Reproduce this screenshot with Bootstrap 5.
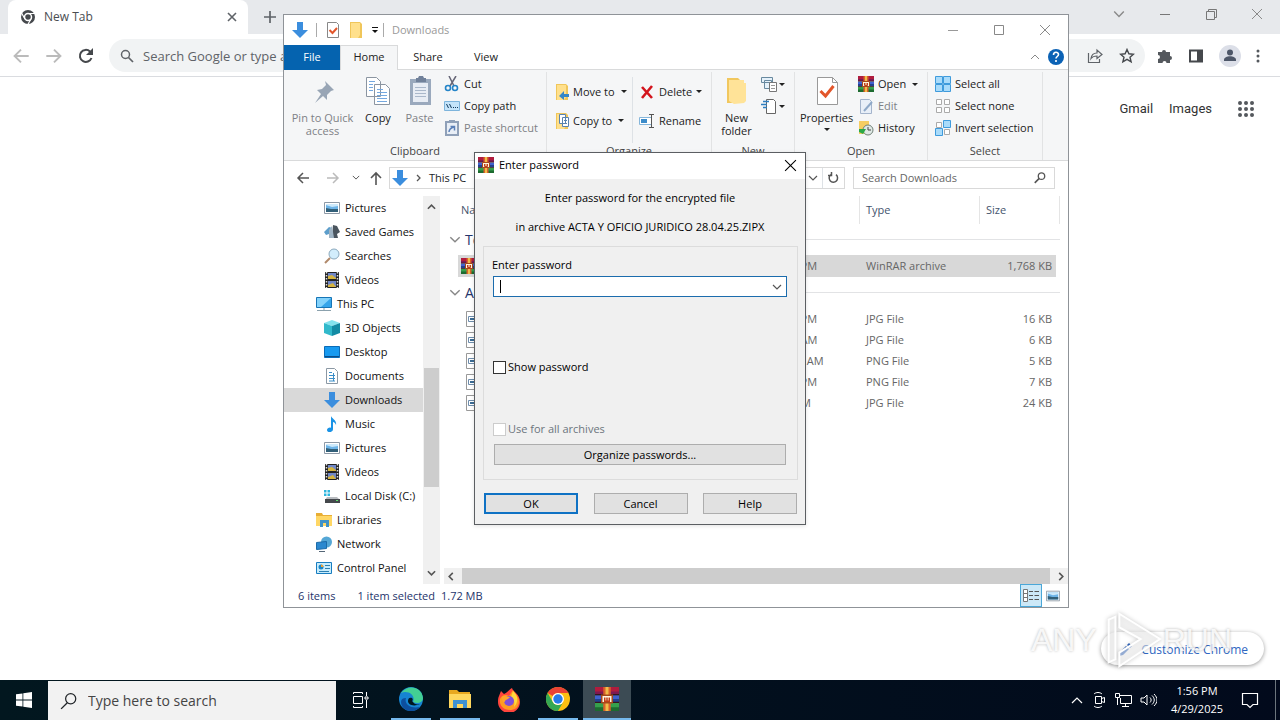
<!DOCTYPE html>
<html lang="en">
<head>
<meta charset="utf-8">
<meta name="viewport" content="width=device-width, initial-scale=1">
<title>New Tab</title>
<link rel="stylesheet" href="https://cdn.jsdelivr.net/npm/bootstrap@5.3.0/dist/css/bootstrap.min.css">
<style>
:root{--ui:"Open Sans","Noto Sans",sans-serif;--line:#d9dadb}
body{font:11px/16px var(--ui);color:#222;background:#fff;overflow:hidden}
svg{display:block;flex:none}
.i16{width:16px;height:16px}.i24{width:24px;height:24px}.i32{width:32px;height:32px}
button,a{color:inherit;text-decoration:none}
button{border:0;background:none;padding:0}
.desk{min-height:100vh}
.dim{color:#bbb}
/* browser */
.tabstrip{height:34px;background:#e7e9ec;padding-left:8px}
.tabitem{width:240px;height:34px;background:#fff;border-radius:8px 8px 0 0;padding:0 10px 0 12px;font-size:12px;color:#4a4d51}
.wbtn{width:46px;height:28px;color:#8a8a8a}
.toolbar{height:43px;border-bottom:1px solid #dadce0;padding:5px 10px 4px 12px;color:#5f6368}
.toolbar>button{margin-right:15px}
.omni{height:33px;border-radius:17px;background:#f1f3f4;padding:0 10px;margin-right:12px}
.omni input{border:0;background:none;outline:0;font-size:13px;color:#5f6368;padding:0}
.omni input::placeholder{color:#5f6368;opacity:1}
.tools{gap:15px;padding-right:10px}
.toplinks{padding:22px 24px 0 0;font:13px/20px Roboto,sans-serif;color:#333}
.customize{height:33px;border-radius:17px;background:#fff;box-shadow:0 1px 4px rgba(0,0,0,.4);color:#2f67c2;font-size:12px;padding:2px 16px 0;margin:0 16px 15px 0}
/* file window */
.fwin{position:absolute;left:283px;top:14px;width:786px;background:#fff;border:1px solid #8f9398;z-index:2}
.ftitle{height:30px;color:#999;padding-left:8px}
.vbar{width:1px;height:14px;background:#aaa}
.ftabs{height:25px;border-bottom:1px solid var(--line)}
.ftab{height:25px;padding:0 0 2px;width:56px}
.ftab.file{background:#0563af;color:#fff}
.ftab.home{width:58px;background:#f5f6f7;border:1px solid var(--line);border-bottom:0}
.ftab.share{width:60px}
.ribbon{height:91px;background:#f5f6f7;border-bottom:1px solid var(--line)}
.rgroup{border-right:1px solid #e2e3e4;margin-top:2px;height:88px;padding-top:1px}
.rlabel{height:16px;text-align:center;color:#444}
.rbody{height:70px}
.big{line-height:13px;text-align:center;padding-top:2px}
.big svg{margin:0 auto 4px}
.small22 button{height:22px}
.org button{height:29px}
.off{color:#7e8186}
.caret{width:0;height:0;border:3px solid transparent;border-top-color:#222;border-bottom:0;margin-left:2px}
.addr{height:35px;padding:5px 12px 7px 12px;color:#555}
.addrbox,.searchbox{height:22px;border:1px solid #d9d9d9;background:#fff}
.addrbox{width:456px;margin-left:5px;padding-left:2px}.searchbox{width:202px;padding:0 8px}
.searchbox input{border:0;outline:0;background:none;padding:0;color:#555}
.searchbox input::placeholder{color:#666;opacity:1}
.tree{width:139px}
.tree a{height:24px;padding-left:40px;gap:5px;color:#111;white-space:nowrap}
.tree a.lvl{padding-left:32px}
.tree a.sel{background:#d9d9d9}
.scroll{width:17px;background:#f0f0f0}
.thumb{background:#cdcdcd}
.vthumb{height:119px;width:15px;margin-top:158px}
.files{margin-left:14px;width:602px;table-layout:fixed;border-collapse:separate;border-spacing:0;color:#666}
.files th{font-weight:400;color:#44546d;height:28px;border-right:1px solid #e5e5e5;padding:0 6px}
.files th:first-child{padding-left:3px}
.files td{height:21px;padding:0 6px;white-space:nowrap}
.files td:first-child{padding-left:3px}
.files td:last-child{text-align:right;padding-right:8px}
.files tr.grp td{height:31px;color:#25346b;font-size:14px;padding:0;text-align:left}
.files .grp div{gap:4px;margin-left:-9px}
.files .grp i{height:1px;background:#e2e3e5;flex:1}
.files .picked td{height:22px;background:#d8d8d8}
.files .picked td:last-child{background:linear-gradient(to right,#d8d8d8 76px,#fff 76px)}
.status{height:23px;color:#25346b;padding-left:14px}
.vmode{width:22px;height:23px;border:1px solid #fff}
.vmode.on{background:#cce8f7;border-color:#4aa7d8}
/* dialog */
.dlg{position:absolute;left:474px;top:152px;width:332px;background:#f0f0f0;border:1px solid #5b5e62;z-index:4;color:#000;box-shadow:0 1px 4px rgba(0,0,0,.12)}
.dtitle{height:26px;background:#fff;padding:0 8px 2px 3px;gap:5px}
.box{border:1px solid #dcdcdc;margin:11px 7px 0 8px;padding:10px 10px 14px 8px;height:234px}
.combo{height:21px;border:1px solid #1b6cad;background:#fff;margin:3px 0 0 1px;position:relative;color:#555}
.combo input{border:0;outline:0;background:none;padding:0 6px;height:19px;caret-color:transparent}
.combo .cur{position:absolute;left:6px;top:3px;width:1px;height:13px;background:#000}
.tickrow{margin-left:1px;gap:2px}
.tick{appearance:none;width:13px;height:13px;border:1px solid #333;background:#fff;margin:0}
.tick:disabled{border-color:#ccc}
.wbt{height:21px;background:#e1e1e1;border:1px solid #adadad;color:#000}
.wbt.go{border:2px solid #0f72c4}
.foot{padding:13px 8px 10px 9px}
.foot .wbt{width:94px}
/* taskbar */
.task{height:40px;background:linear-gradient(to right,#02171f,#020a1c);color:#fff}
.tsearch{width:288px;height:39px;margin-top:1px;background:#f2f2f2;padding:0 12px;gap:10px}
.tsearch input{border:0;outline:0;background:none;font:14px/20px var(--ui);color:#333;padding:0}
.tsearch input::placeholder{color:#444;opacity:1}
.pinned{padding-left:3px}
.tb{width:48px;height:40px;margin-right:1px;padding:0 4px;display:flex;flex-direction:column}
.tb svg{margin:auto}
.tb.open::after{content:"";height:2px;width:100%;background:#76b9ed}
.tb.act{background:#3c4b54;padding:0}
.tray{gap:8px}
.clock{font-size:11px;line-height:18px;text-align:center;width:64px}
/* watermark */
.wm{position:absolute;right:48px;bottom:49px;z-index:5;pointer-events:none;font:32px/62px "Liberation Sans",sans-serif;color:rgba(255,255,255,.85);text-shadow:0 0 3px rgba(0,0,0,.28)}
.wm svg{filter:drop-shadow(0 0 2px rgba(0,0,0,.25))}
</style>
</head>
<body>
<svg width="0" height="0" class="position-absolute" aria-hidden="true">
<symbol id="down" viewBox="0 0 16 16"><path d="M5 0h6v8h5L8 16 0 8h5z" fill="#3b8ede"/></symbol>
<symbol id="rar" viewBox="0 0 16 16"><path fill="#b01c3e" d="M0 0h16v5H0z"/><path fill="#7d1a52" d="M0 3h16v2H0z"/><path fill="#3f62cf" d="M0 5.500h16v4.500H0z"/><path fill="#23408f" d="M0 8h16v2H0z"/><path fill="#35a04c" d="M0 10.500h16V16H0z"/><path fill="#1d6b30" d="M0 13.500h16V16H0z"/><path fill="#35161c" d="M0 4.700h16v.8H0zM0 9.900h16v.8H0z"/><path fill="#d9622a" d="M5.500 0h5v16h-5z"/><path fill="#f0bd4a" d="M7 0h2v16H7z"/><path fill="#fff6df" stroke="#a5481c" d="M4.500 5.500h7v5h-7z"/><path stroke="#c23e18" d="M6.500 7v2.500h3V7M8 7v2" fill="none"/></symbol>
<symbol id="sheet" viewBox="0 0 32 32"><path fill="#fff" stroke="#999" d="M6.500 2.500h15l5 5v22h-20z"/><path fill="none" stroke="#999" d="M21.500 2.500v5h5"/><path fill="none" stroke="#e2562b" stroke-width="3" d="M9.500 16l5 5 8-10"/></symbol>
<symbol id="sheetsm" viewBox="0 0 16 16"><path fill="#fff" stroke="#888" d="M2.500.5h9l2 2v13h-11z"/><path fill="none" stroke="#e2562b" stroke-width="2" d="M4.500 8l3 3 4.500-5"/></symbol>
<symbol id="folder" viewBox="0 0 14 16"><path fill="#f0c65a" d="M1 0h10l2 2v14H1z"/><path fill="#ffe08c" d="M2 1h9v12l-2 3H2z"/></symbol>
<symbol id="pic" viewBox="0 0 16 16"><path fill="#fff" stroke="#8d99a6" d="M.5 2.500h15v11H.5z"/><path fill="#6db4e8" d="M2 4h12v8H2z"/><path fill="#cce9fb" d="M2 4h12v2L8 7 2 5z"/><path fill="#315f78" d="M2 8l5 1 7 0v3H2z"/></symbol>
<symbol id="film" viewBox="0 0 16 16"><path fill="#222" d="M1 0h14v16H1z"/><path fill="#7087c7" d="M4 1h8v6H4zM4 9h8v6H4z"/><path fill="#d5b440" d="M4 4l4-1 4 3v1H4zM4 13l5-2 3 4H4z"/><path stroke="#ddd" stroke-width="1.500" stroke-dasharray="1.500 1.500" d="M2.500 0v16M13.500 0v16"/></symbol>
<symbol id="screen" viewBox="0 0 16 16"><path fill="#36a5ea" stroke="#1775b6" d="M.5 1.500h15v10H.5z"/><path fill="#83d2fb" d="M1 2h14L5 11H1z"/><path stroke="#8ba1ad" stroke-width="1" d="M1 14.500h14M8 12v2"/></symbol>
<symbol id="chrome" viewBox="0 0 24 24"><circle cx="12" cy="12" r="12" fill="#fbbf12"/><path fill="#e94235" d="M1.600 6A12 12 0 0 1 22.400 6H12a6 6 0 0 0-5.200 3z"/><path fill="#34a853" d="M1.600 6A12 12 0 0 0 12 24l5.200-9A6 6 0 0 1 6.800 15z"/><circle cx="12" cy="12" r="6" fill="#fff"/><circle cx="12" cy="12" r="4.700" fill="#277be8"/></symbol>
<symbol id="img" viewBox="0 0 14 16"><path fill="#fff" stroke="#999" d="M1.500.5h9l3 3v12h-12z"/><path fill="#fff" stroke="#6e8dac" d="M3.500 5.500h7v5h-7z"/><path fill="#3b6b94" d="M5 7h4v2H5z"/></symbol>
<symbol id="x" viewBox="0 0 12 12"><path d="M1 1l10 10M11 1L1 11" stroke="currentColor" fill="none"/></symbol>
<symbol id="mag" viewBox="0 0 16 16"><circle cx="9.500" cy="6" r="4.500" fill="none" stroke="currentColor" stroke-width="1.100"/><path stroke="currentColor" stroke-width="1.200" d="M6.500 9.500L1 15"/></symbol>
<symbol id="chev" viewBox="0 0 10 6"><path d="M1 1l4 4 4-4" fill="none" stroke="currentColor" stroke-width="1.200"/></symbol>
<symbol id="arr" viewBox="0 0 14 14"><path d="M13 7H2M7 2L2 7l5 5" fill="none" stroke="currentColor" stroke-width="1.500"/></symbol>
<symbol id="arl" viewBox="0 0 14 14"><path d="M1 7h11M7 2l5 5-5 5" fill="none" stroke="currentColor" stroke-width="1.500"/></symbol>
</svg>

<div class="desk d-flex flex-column position-relative">
  <header>
    <div class="tabstrip d-flex">
      <div class="tabitem d-flex align-items-center">
        <svg width="16" height="16" viewBox="0 0 16 16"><circle cx="8" cy="8" r="7" fill="#45484c"/><circle cx="8" cy="8" r="3.500" fill="#45484c" stroke="#fff" stroke-width="1.500"/><path stroke="#fff" stroke-width="1.200" d="M8 4.500h7M5 10L1.500 4M11 10l-3.500 6"/></svg>
        <span class="ms-2">New Tab</span>
        <button class="ms-auto" aria-label="Close tab"><svg width="12" height="12" viewBox="0 0 12 12"><path d="M2 2l8 8M10 2l-8 8" stroke="#5f6368" stroke-width="1.600"/></svg></button>
      </div>
      <button class="ms-3" aria-label="New tab"><svg width="12" height="12" viewBox="0 0 12 12"><path d="M6 0v12M0 6h12" stroke="#5f6368" stroke-width="1.700"/></svg></button>
      <div class="ms-auto d-flex">
        <button class="wbtn" aria-label="Search tabs"><svg class="m-auto" width="12" height="8"><use href="#chev"/></svg></button>
        <button class="wbtn" aria-label="Minimize"><svg class="m-auto" width="10" height="10"><path d="M0 5.500h10" stroke="#777"/></svg></button>
        <button class="wbtn" aria-label="Restore"><svg class="m-auto" width="11" height="11"><path d="M.5 2.500h8v8h-8zM2.500 2V.5h8v8H9" fill="none" stroke="#777"/></svg></button>
        <button class="wbtn" aria-label="Close"><svg class="m-auto" width="12" height="12"><use href="#x"/></svg></button>
      </div>
    </div>
    <div class="toolbar d-flex align-items-center">
      <button class="dim" aria-label="Back"><svg width="18" height="18"><use href="#arr"/></svg></button>
      <button class="dim" aria-label="Forward"><svg width="18" height="18"><use href="#arl"/></svg></button>
      <button aria-label="Reload"><svg width="16" height="16" viewBox="0 0 16 16"><path d="M13.500 10A6 6 0 1 1 12 3.500L13.500 5" fill="none" stroke="#45484c" stroke-width="2"/><path fill="#45484c" d="M15 0v7H8z"/></svg></button>
      <div class="omni d-flex align-items-center flex-grow-1">
        <svg class="me-2" width="16" height="16" viewBox="0 0 16 16"><circle cx="6.500" cy="6.500" r="4" fill="none" stroke="#5f6368" stroke-width="1.500"/><path d="M9.500 9.500L14 14" stroke="#5f6368" stroke-width="1.700"/></svg>
        <input class="flex-grow-1" placeholder="Search Google or type a URL" aria-label="Address and search">
        <svg class="me-3" width="16" height="16" viewBox="0 0 16 16"><path d="M1.500 5v9.500h11V11M4 10.500c.5-4 3-5.500 6-5.500V2l5 4.500-5 4V8c-3 0-4.500.5-6 2.500z" fill="none" stroke="#5f6368" stroke-width="1.200"/></svg>
        <svg width="16" height="16" viewBox="0 0 16 16"><path d="M8 1.500l1.900 4.300 4.600.4-3.500 3 1.100 4.600L8 11.300l-4.100 2.500L5 9.200l-3.500-3 4.600-.4z" fill="none" stroke="#45484c" stroke-width="1.400"/></svg>
      </div>
      <div class="tools d-flex align-items-center">
        <svg width="16" height="16" viewBox="0 0 16 16"><path fill="#54585d" d="M1 4h4a2 2 0 1 1 4 0h4v4a2 2 0 1 1 0 4v3H9.500a2 2 0 0 0-4 0H1v-4a2 2 0 0 0 0-4z"/></svg>
        <svg width="16" height="16" viewBox="0 0 16 16"><path d="M2 2.500h12v11H2z" fill="none" stroke="#45484c" stroke-width="2"/><path fill="#45484c" d="M9 2h5v12H9z"/></svg>
        <svg width="22" height="22" viewBox="0 0 22 22"><circle cx="11" cy="11" r="11" fill="#dcdfe8"/><circle cx="11" cy="7.500" r="3" fill="#4d5668"/><path fill="#4d5668" d="M5 16v-1c0-5 12-5 12 0v1z"/></svg>
        <svg width="4" height="14" viewBox="0 0 4 14" fill="#54585d"><circle cx="2" cy="2" r="1.500"/><circle cx="2" cy="7" r="1.500"/><circle cx="2" cy="12" r="1.500"/></svg>
      </div>
    </div>
  </header>

  <main class="flex-grow-1 d-flex flex-column justify-content-between align-items-end">
    <nav class="toplinks d-flex align-items-center">
      <a class="me-3" href="#">Gmail</a><a href="#">Images</a>
      <svg class="ms-4" width="20" height="20" viewBox="0 0 20 20"><path d="M4 4h.01M10 4h.01M16 4h.01M4 10h.01M10 10h.01M16 10h.01M4 16h.01M10 16h.01M16 16h.01" stroke="#54585d" stroke-width="4" stroke-linecap="round"/></svg>
    </nav>
    <button class="customize d-flex align-items-center gap-2"><svg width="16" height="16" viewBox="0 0 16 16"><path d="M2 14l1-4 6-6 3 3-6 6zM10 3l2-2 3 3-2 2z" fill="#2f67c2"/></svg>Customize Chrome</button>
  </main>

  <footer class="task d-flex">
    <button class="tb m-0" aria-label="Start"><svg width="16" height="16" viewBox="0 0 16 16"><path fill="#fff" d="M0 2.300L6.500 1.400v6.200H0zM7.300 1.300L16 0v7.600H7.300zM0 8.400h6.500v6.200L0 13.700zM7.300 8.400H16V16l-8.700-1.300z"/></svg></button>
    <div class="tsearch d-flex align-items-center text-dark"><svg width="18" height="18"><use href="#mag"/></svg><input placeholder="Type here to search" aria-label="Search Windows"></div>
    <button class="tb m-0" aria-label="Task view"><svg width="17" height="16" viewBox="0 0 17 16"><path d="M1.500 4.500h9v7h-9zM1.500 2V.5h9V2M1.500 14v1.500h9V14M14.500 0v4M14.500 8v8M13 5h3v2h-3z" fill="none" stroke="#fff"/></svg></button>
    <div class="pinned d-flex">
    <button class="tb open" aria-label="Edge"><svg class="i24" viewBox="0 0 24 24"><circle cx="12" cy="12" r="12" fill="#1684d2"/><path fill="#43cf94" d="M2 6C8-3 23-1 24 11c0 5-6 6-10 4 3-7-5-12-12-9z"/><path fill="#0d4f9e" d="M7 11c-2 6 4 11 14 9-5 6-15 5-18-1-2-5-1-8 4-8z"/><path fill="#02171f" d="M14 15c-2-1 1-2-1-4-2-1-4 0-4 3 0 4 6 6 12 3-3 1-6 0-7-2z"/></svg></button>
    <button class="tb open" aria-label="File Explorer"><svg class="i24" viewBox="0 0 24 24"><path fill="#e8a820" d="M1 3h8l2 2h11v5H1z"/><path fill="#ffd75e" d="M1 7h22v14H1z"/><path fill="#3f92d2" d="M5 13h14v8h-4v-4H9v4H5z"/></svg></button>
    <button class="tb" aria-label="Firefox"><svg class="i24" viewBox="0 0 24 24"><path fill="#ff453c" d="M2 8l2-5 3 3c4-2 6-5 8-6 1 4 8 6 8 14a11 11 0 0 1-22 0c0-2 0-4 1-6z"/><path fill="#ff9d20" d="M3 11c2-4 5-5 9-3l4-6c1 4 6 6 6 11 0 7-5 9-9 9-7 0-11-5-10-11z"/><path fill="#ffd93d" d="M16 3c5 4 6 11 1 16 1-5 0-8-3-10z"/><circle cx="12" cy="13" r="5" fill="#8050d8"/><path fill="#ffa42b" d="M5 9c3-2 5 0 8 0-2 3-4 2-5 4-1 3-3 1-3-4z"/></svg></button>
    <button class="tb open" aria-label="Chrome"><svg class="i24"><use href="#chrome"/></svg></button>
    <button class="tb open act" aria-label="WinRAR"><svg class="i24"><use href="#rar"/></svg></button>
    </div>
    <div class="tray ms-auto d-flex align-items-center">
      <svg width="12" height="8" viewBox="0 0 12 8"><path d="M1 7l5-5 5 5" fill="none" stroke="#fff" stroke-width="1.200"/></svg>
      <svg width="16" height="18" viewBox="0 0 16 18"><path d="M4.500 5.500h6v7h-6zM10.500 7.500l3-1v5l-3-1M3 3c2-2 6-2 8 0M3 15c2 2 6 2 8 0" fill="none" stroke="#fff"/></svg>
      <svg width="17" height="16" viewBox="0 0 17 16"><path d="M5 3.500h11.500v8H5.500V6M10.500 12v3M7 14.500h7M.5 1.500h4v4h-4zM2.500 6v7" fill="none" stroke="#fff"/></svg>
      <svg width="17" height="16" viewBox="0 0 17 16"><path d="M1 6h3l3-3v10l-3-3H1zM10 5.500c1.500 1.500 1.500 3.500 0 5M12 3.500c3 3 3 6 0 9M14 2c4 4 4 8 0 12" fill="none" stroke="#fff"/></svg>
      <div class="clock">1:56 PM<br>4/29/2025</div>
      <svg class="ms-1 me-2" width="18" height="18" viewBox="0 0 18 18"><path d="M1.500 2.500h15v11H12L9 16.500l-3-3H1.500z" fill="none" stroke="#fff" stroke-width="1.200"/></svg>
      <div class="align-self-stretch border-start border-secondary ps-1"></div>
    </div>
  </footer>

  <section class="fwin" aria-label="Downloads">
    <div class="ftitle d-flex align-items-center">
      <svg class="i16"><use href="#down"/></svg><span class="vbar ms-2"></span>
      <svg class="i16 ms-2"><use href="#sheetsm"/></svg><svg class="ms-2" width="14" height="16"><use href="#folder"/></svg>
      <svg class="ms-2" width="8" height="9"><path d="M1 1.500h6" stroke="#111"/><path d="M1 4h6L4 7z" fill="#111"/></svg>
      <span class="vbar mx-1"></span><span class="ms-1">Downloads</span>
      <div class="ms-auto d-flex">
        <button class="wbtn" aria-label="Minimize"><svg class="m-auto" width="10" height="10"><path d="M0 5.500h10" stroke="#999"/></svg></button>
        <button class="wbtn" aria-label="Maximize"><svg class="m-auto" width="10" height="10"><path d="M.5.5h9v9h-9z" fill="none" stroke="#888"/></svg></button>
        <button class="wbtn" aria-label="Close"><svg class="m-auto" width="12" height="12"><use href="#x"/></svg></button>
      </div>
    </div>
    <div class="ftabs d-flex align-items-start">
      <button class="ftab file">File</button><button class="ftab home">Home</button><button class="ftab share">Share</button><button class="ftab">View</button>
      <svg class="ms-auto me-2 align-self-center" width="10" height="6" viewBox="0 0 10 6"><path d="M1 5l4-4 4 4" fill="none" stroke="#888"/></svg>
      <button class="me-1 align-self-center" aria-label="Help"><svg class="i16" viewBox="0 0 16 16"><circle cx="8" cy="8" r="8" fill="#0b62b5"/><path d="M5.500 6c0-3.500 5-3.500 5-.5C10.500 7.500 8 7.500 8 9.500M8 11v2" fill="none" stroke="#fff" stroke-width="1.600"/></svg></button>
    </div>
    <div class="ribbon d-flex">
      <div class="rgroup" style="width:263px">
        <div class="rbody d-flex align-items-start">
          <button class="big off" style="width:77px"><svg class="i32" viewBox="0 0 32 32"><path fill="#98a5b5" d="M18 6l9 9-3 1-4 4 0 5-4-4-8 7 6-9-4-4 5-1 4-4z"/></svg>Pin to Quick<br>access</button>
          <button class="big" style="width:34px"><svg class="i32" viewBox="0 0 32 32"><path fill="#fff" stroke="#8b95a1" d="M4.500 2.500h10l4 4v15h-14zM12.500 9.500h11l4 4v16h-15z"/><path stroke="#75a8df" d="M7 6.500h6M7 9.500h4M7 12.500h4M7 15.500h4M15 14.500h6M15 17.500h10M15 20.500h10M15 23.500h10M15 26.500h10"/></svg>Copy</button>
          <button class="big off" style="width:49px"><svg class="i32" viewBox="0 0 32 32"><path fill="#9aa9bd" d="M6 4h21v26H6z"/><path fill="#e7ecf4" d="M9 8h15v19H9z"/><path fill="#71819a" d="M12 3h2l1-2h4l1 2h2v4H12z"/><path stroke="#a9b7ca" d="M11 12.500h11M11 15.500h11M11 18.500h11M11 21.500h11"/></svg>Paste</button>
          <div class="small22 d-flex flex-column">
            <button class="d-flex align-items-center gap-1"><svg class="i16" viewBox="0 0 16 16"><path d="M5 0l5 10M12 0L6 10" stroke="#667" stroke-width="1.500"/><circle cx="4" cy="12" r="2.500" fill="none" stroke="#2484c8" stroke-width="1.600"/><circle cx="11" cy="12" r="2.500" fill="none" stroke="#2484c8" stroke-width="1.600"/></svg>Cut</button>
            <button class="d-flex align-items-center gap-1"><svg class="i16" viewBox="0 0 16 16"><path fill="#c4e4fa" stroke="#7db4dc" d="M.5 3.500h15v9H.5z"/><path d="M2.500 6l2 4M5.500 6l2 4M9 9.500h1M11 9.500h1M13 9.500h1" stroke="#123a5c"/></svg>Copy path</button>
            <button class="off d-flex align-items-center gap-1"><svg class="i16" viewBox="0 0 16 16"><path fill="#e8eef6" stroke="#8fa0b8" stroke-width="2" d="M2 2h12v13H2z"/><path fill="#8fa0b8" d="M5 0h6v3H5z"/><path d="M5 12c0-3 2-4 5-5M6.500 6.500h4v4" fill="none" stroke="#5b80b8" stroke-width="1.500"/></svg>Paste shortcut</button>
          </div>
        </div><div class="rlabel">Clipboard</div>
      </div>
      <div class="rgroup" style="width:165px">
        <div class="rbody d-flex ps-2 pt-1 org">
          <div class="d-flex flex-column border-end" style="width:78px">
            <button class="d-flex align-items-center gap-1 text-nowrap"><svg width="14" height="16" viewBox="0 0 14 16"><use href="#folder"/><path fill="#3687c7" d="M14 10H9V7l-5 5 5 4v-3h5z"/></svg>Move to<i class="caret"></i></button>
            <button class="d-flex align-items-center gap-1 text-nowrap"><svg width="14" height="16" viewBox="0 0 14 16"><use href="#folder"/><path fill="#fff" stroke="#5983b0" d="M4.500 1.500h6v9h-6zM7.500 4.500h6v9h-6z"/><path d="M9 7.500h3M9 10.500h3" stroke="#5983b0"/></svg>Copy to<i class="caret"></i></button>
          </div>
          <div class="d-flex flex-column" style="margin-left:6px">
            <button class="d-flex align-items-center gap-1"><svg class="i16" viewBox="0 0 16 16"><path d="M3 3l10 11M13 2L3 14" stroke="#d3141c" stroke-width="2.600"/></svg>Delete<i class="caret ms-0"></i></button>
            <button class="d-flex align-items-center gap-1"><svg class="i16" viewBox="0 0 16 16"><path fill="#fff" stroke="#86b6db" d="M.5 4.500h12v7H.5z"/><path fill="#3c8cca" d="M2 6h6v4H2z"/><path d="M12.500 2v12M10 1.500h5M10 14.500h5" stroke="#555"/></svg>Rename</button>
          </div>
        </div><div class="rlabel">Organize</div>
      </div>
      <div class="rgroup" style="width:83px">
        <div class="rbody d-flex align-items-start">
          <button class="big" style="width:49px"><svg class="i32" viewBox="0 0 32 32"><path fill="#f1c75e" d="M6 3h11l2 2v23H6z"/><path fill="#ffe398" d="M8 5h15v3h2v18l-2 2-10 1-5-3z"/></svg>New<br>folder</button>
          <div class="small22">
            <button class="d-flex align-items-center" aria-label="New item"><svg class="i16" viewBox="0 0 16 16"><path fill="#e5f1fa" stroke="#68899f" d="M.5 1.500h11v5H.5zM3.500 4.500h7v8h-7z"/><path fill="#fff" stroke="#777" d="M8.500 6.500h7v9h-7z"/><path stroke="#999" d="M10 9.500h4M10 12.500h4"/></svg><i class="caret"></i></button>
            <button class="d-flex align-items-center" aria-label="Easy access"><svg class="i16" viewBox="0 0 16 16"><path fill="#fff" stroke="#666" d="M5.500 1.500h7l2 2v12h-9z"/><path d="M2 3.500h6M0 6.500h6M2 9.500h4" stroke="#2e7ec0" stroke-width="1.500"/></svg><i class="caret"></i></button>
          </div>
        </div><div class="rlabel">New</div>
      </div>
      <div class="rgroup" style="width:133px">
        <div class="rbody d-flex align-items-start">
          <button class="big" style="width:63px"><svg class="i32"><use href="#sheet"/></svg>Properties<i class="caret d-block mx-auto mt-1"></i></button>
          <div class="small22">
            <button class="d-flex align-items-center gap-1"><svg class="i16"><use href="#rar"/></svg>Open<i class="caret"></i></button>
            <button class="off d-flex align-items-center gap-1"><svg class="i16" viewBox="0 0 16 16"><path fill="#e8eff8" stroke="#a4b4cc" d="M2.500 1.500h9l2 2v12h-11z"/><path d="M14 4L6 13" stroke="#8fa9c8" stroke-width="2"/></svg>Edit</button>
            <button class="d-flex align-items-center gap-1"><svg class="i16" viewBox="0 0 16 16"><path fill="#f6cd62" d="M1 1h10v13H1z"/><circle cx="10" cy="10" r="5" fill="#dfe9e5" stroke="#718078"/><path d="M10 7v3h3" fill="none" stroke="#444"/><path fill="#2ba847" d="M1 9h7l-3 5-4-2z"/></svg>History</button>
          </div>
        </div><div class="rlabel">Open</div>
      </div>
      <div class="rgroup" style="width:115px">
        <div class="rbody small22" style="padding-left:7px">
          <button class="d-flex align-items-center gap-1"><svg class="i16" viewBox="0 0 16 16"><path fill="#a9dbfa" stroke="#3f9bdc" d="M.5.5h7v7h-7zM8.500.5h7v7h-7zM.5 8.500h7v7h-7zM8.500 8.500h7v7h-7z"/></svg>Select all</button>
          <button class="d-flex align-items-center gap-1"><svg class="i16" viewBox="0 0 16 16"><path fill="#fff" stroke="#aaa" d="M1.500 1.500h5v5h-5zM9.500 1.500h5v5h-5zM1.500 9.500h5v5h-5zM9.500 9.500h5v5h-5z"/></svg>Select none</button>
          <button class="d-flex align-items-center gap-1 text-nowrap"><svg class="i16" viewBox="0 0 16 16"><path fill="#fff" stroke="#aaa" d="M1.500 2.500h5v5h-5zM9.500 9.500h5v5h-5z"/><path fill="#a9dbfa" stroke="#3f9bdc" d="M8.500.5h7v7h-7zM.5 8.500h7v7h-7z"/></svg>Invert selection</button>
        </div><div class="rlabel">Select</div>
      </div>
    </div>
    <div class="addr d-flex align-items-center">
      <button aria-label="Back"><svg width="14" height="14"><use href="#arr"/></svg></button>
      <button class="dim ms-3" aria-label="Forward"><svg width="14" height="14"><use href="#arl"/></svg></button>
      <svg style="margin-left:12px" width="8" height="5"><use href="#chev"/></svg>
      <button class="ms-2" aria-label="Up"><svg width="16" height="14" viewBox="0 0 16 14"><path d="M8 14V2M3 7l5-5 5 5" fill="none" stroke="currentColor" stroke-width="1.600"/></svg></button>
      <div class="addrbox d-flex align-items-center"><svg class="i16"><use href="#down"/></svg><svg class="mx-2" width="5" height="8"><path d="M1 1l3 3-3 3" fill="none" stroke="#555" stroke-width="1.300"/></svg><span class="text-dark">This PC</span>
        <svg class="ms-auto me-1" width="10" height="6"><use href="#chev"/></svg><span class="border-start ps-1 pe-1 h-100 d-flex align-items-center"><svg width="13" height="14" viewBox="0 0 13 14"><path d="M4 3.500a4.200 4.200 0 1 0 5 .2M4.500 1v3.500H1" fill="none" stroke="#555" stroke-width="1.500"/></svg></span></div>
      <div class="searchbox d-flex align-items-center ms-2"><input class="w-100" placeholder="Search Downloads" aria-label="Search Downloads"><svg width="12" height="12" viewBox="0 0 16 16"><circle cx="10" cy="5.500" r="4.300" fill="none" stroke="#555" stroke-width="1.800"/><path stroke="#555" stroke-width="2.200" d="M7 8.500L1 14.500"/></svg></div>
    </div>
    <div class="d-flex">
      <nav class="tree pb-1">
        <a href="#" class="d-flex align-items-center"><svg class="i16"><use href="#pic"/></svg>Pictures</a>
        <a href="#" class="d-flex align-items-center"><svg class="i16" viewBox="0 0 16 16"><path fill="#4a555e" d="M9 1l4 1 3 6-3 2 1 4H8z"/><path fill="#5d9ecb" d="M0 8l5-5 3 1v9l-3-3-3 1z"/><path fill="#9fb4c4" d="M5 6l3-4 2 12H5z"/></svg>Saved Games</a>
        <a href="#" class="d-flex align-items-center"><svg class="i16" viewBox="0 0 16 16"><path d="M6 10l-5 5" stroke="#b08a6b" stroke-width="2"/><circle cx="10" cy="6" r="5" fill="#d2edfc" stroke="#8ba9bd"/></svg>Searches</a>
        <a href="#" class="d-flex align-items-center"><svg class="i16"><use href="#film"/></svg>Videos</a>
        <a href="#" class="lvl d-flex align-items-center"><svg class="i16"><use href="#screen"/></svg>This PC</a>
        <a href="#" class="d-flex align-items-center"><svg class="i16" viewBox="0 0 16 16"><path fill="#84e3ee" d="M0 3l8-3 8 3-8 3z"/><path fill="#31b9cb" d="M0 3l8 3v10l-8-3z"/><path fill="#138ba4" d="M16 3L8 6v10l8-3z"/></svg>3D Objects</a>
        <a href="#" class="d-flex align-items-center"><svg class="i16" viewBox="0 0 16 16"><path fill="#179af0" stroke="#0a6cb8" d="M.5 2.500h15v11H.5z"/><path d="M1 12.500h14" stroke="#0b4d88"/></svg>Desktop</a>
        <a href="#" class="d-flex align-items-center"><svg class="i16" viewBox="0 0 16 16"><path fill="#fff" stroke="#8b98a4" d="M2.500.5h8l3 3v12h-11z"/><path d="M5 4.500h3M5 7.500h6M5 10.500h6M5 13h6M9.500 5v8" stroke="#3b8ec8"/></svg>Documents</a>
        <a href="#" class="sel d-flex align-items-center"><svg class="i16"><use href="#down"/></svg>Downloads</a>
        <a href="#" class="d-flex align-items-center"><svg class="i16" viewBox="0 0 16 16"><path fill="#1a93e6" d="M7 0c1 3 6 4 5 9-1-3-3-3-3-3v7c0 4-6 4-6 1 0-2 3-3 4-2z"/></svg>Music</a>
        <a href="#" class="d-flex align-items-center"><svg class="i16"><use href="#pic"/></svg>Pictures</a>
        <a href="#" class="d-flex align-items-center"><svg class="i16"><use href="#film"/></svg>Videos</a>
        <a href="#" class="d-flex align-items-center"><svg class="i16" viewBox="0 0 16 16"><path fill="#2cb5dd" d="M0 2h2.500v2.500H0zM3.500 2H6v2.500H3.500zM0 5.500h2.500V8H0zM3.500 5.500H6V8H3.500z"/><path fill="#b9bcc0" d="M3 9h10l3 3H1z"/><path fill="#44484c" d="M1 11h15v4H1z"/><path fill="#5ee06a" d="M12 12h2v1h-2z"/></svg>Local Disk (C:)</a>
        <a href="#" class="lvl d-flex align-items-center"><svg class="i16" viewBox="0 0 16 16"><path fill="#e8ae35" d="M0 1h6l1 2h9v4H0z"/><path fill="#ffd765" d="M0 4h16v10H0z"/><path fill="#3f92c9" d="M4 8h9v7h-3v-4H7v4H4z"/></svg>Libraries</a>
        <a href="#" class="lvl d-flex align-items-center"><svg class="i16" viewBox="0 0 16 16"><circle cx="10.500" cy="6" r="5.500" fill="#55a7d6"/><path fill="#2b88cf" stroke="#1c6ba8" d="M.5 6.500l10-1v7l-10 1z"/><path stroke="#567" d="M3 15.500h6"/></svg>Network</a>
        <a href="#" class="lvl d-flex align-items-center"><svg class="i16" viewBox="0 0 16 16"><path fill="#c7ecfc" stroke="#187dc0" d="M.5 2.500h15v11H.5z"/><circle cx="5" cy="7" r="2.500" fill="#1987c9"/><path d="M9 5.500h5M9 8.500h5M3 11.500h10" stroke="#2e7fb0"/><path fill="#f0a035" d="M5 7V4.500A2.500 2.500 0 0 1 7.500 7z"/></svg>Control Panel</a>
      </nav>
      <div class="scroll d-flex flex-column align-items-center py-2"><svg width="9" height="6" viewBox="0 0 10 6"><path d="M1 5l4-4 4 4" fill="none" stroke="#555" stroke-width="1.800"/></svg><div class="thumb vthumb"></div><svg class="mt-auto" width="9" height="6" viewBox="0 0 10 6"><path d="M1 1l4 4 4-4" fill="none" stroke="#555" stroke-width="1.800"/></svg></div>
      <div class="flex-grow-1 d-flex flex-column ms-1">
        <table class="files">
          <colgroup><col style="width:257px"><col style="width:145px"><col style="width:120px"><col style="width:80px"></colgroup>
          <thead><tr><th>Name</th><th>Date modified</th><th>Type</th><th>Size</th></tr></thead>
          <tbody>
            <tr class="grp"><td colspan="4"><div class="d-flex align-items-center"><svg width="12" height="7" color="#888"><use href="#chev"/></svg>Today (1)<i></i></div></td></tr>
            <tr class="picked"><td><svg class="i16" role="img" aria-label="Archive"><use href="#rar"/></svg></td><td>4/29/2025 1:56 PM</td><td>WinRAR archive</td><td>1,768 KB</td></tr>
            <tr class="grp"><td colspan="4"><div class="d-flex align-items-center"><svg width="12" height="7" color="#888"><use href="#chev"/></svg>A long time ago (5)<i></i></div></td></tr>
            <tr><td><svg class="ms-1" width="14" height="16"><use href="#img"/></svg></td><td>5/27/2014 9:15 PM</td><td>JPG File</td><td>16 KB</td></tr>
            <tr><td><svg class="ms-1" width="14" height="16"><use href="#img"/></svg></td><td>3/20/2014 8:31 AM</td><td>JPG File</td><td>6 KB</td></tr>
            <tr><td><svg class="ms-1" width="14" height="16"><use href="#img"/></svg></td><td>2/17/2014 11:26 AM</td><td>PNG File</td><td>5 KB</td></tr>
            <tr><td><svg class="ms-1" width="14" height="16"><use href="#img"/></svg></td><td>8/12/2014 6:40 PM</td><td>PNG File</td><td>7 KB</td></tr>
            <tr><td><svg class="ms-1" width="14" height="16"><use href="#img"/></svg></td><td>6/4/2014 2:05 PM</td><td>JPG File</td><td>24 KB</td></tr>
          </tbody>
        </table>
        <div class="mt-auto d-flex align-items-center" style="background:#f0f0f0;height:16px"><svg width="6" height="9" viewBox="0 0 6 10" class="ms-1 me-2"><path d="M5 1L1 5l4 4" fill="none" stroke="#555" stroke-width="1.800"/></svg><div class="thumb flex-grow-1 h-100"></div><svg width="6" height="9" viewBox="0 0 6 10" class="ms-2 me-1"><path d="M1 1l4 4-4 4" fill="none" stroke="#555" stroke-width="1.800"/></svg></div>
      </div>
    </div>
    <div class="status d-flex align-items-center"><span>6 items</span><span style="margin-left:22px">1 item selected</span><span style="margin-left:6px">1.72 MB</span>
      <div class="ms-auto me-1 d-flex">
        <button class="vmode on" aria-label="Details"><svg class="i16 m-auto" viewBox="0 0 16 16"><path fill="#fff" stroke="#777" d="M.5 1.500h4v12h-4zM.5 5.500h4M.5 9.500h4"/><path d="M6 3.500h4M11.500 3.500H16M6 7.500h4M11.500 7.500H16M6 11.500h4M11.500 11.500H16" stroke="#555"/></svg></button>
        <button class="vmode" aria-label="Thumbnails"><svg class="m-auto" width="14" height="14"><use href="#pic"/></svg></button>
      </div>
    </div>
  </section>

  <form class="dlg" role="dialog" aria-label="Enter password">
    <div class="dtitle d-flex align-items-center"><svg class="i16"><use href="#rar"/></svg><span>Enter password</span><button type="button" class="ms-auto" aria-label="Close"><svg width="13" height="13"><use href="#x"/></svg></button></div>
    <p class="text-center mb-0" style="padding-top:11px">Enter password for the encrypted file</p>
    <p class="text-center mb-0" style="padding-top:13px">in archive ACTA Y OFICIO JURIDICO 28.04.25.ZIPX</p>
    <div class="box d-flex flex-column">
      <label for="pw">Enter password</label>
      <div class="combo d-flex align-items-center pe-1"><input id="pw" class="flex-grow-1" autocomplete="off"><span class="cur"></span><button type="button" aria-label="Saved passwords"><svg width="10" height="6"><use href="#chev"/></svg></button></div>
      <div class="tickrow d-flex align-items-center mt-auto" style="margin-bottom:46px"><input type="checkbox" class="tick" id="sp"><label for="sp">Show password</label></div>
      <div class="tickrow d-flex align-items-center text-secondary" style="margin-bottom:7px"><input type="checkbox" class="tick" id="ua" disabled><label for="ua">Use for all archives</label></div>
      <button type="button" class="wbt" style="margin:0 1px 0 2px">Organize passwords...</button>
    </div>
    <div class="foot d-flex justify-content-between"><button type="button" class="wbt go">OK</button><button type="button" class="wbt">Cancel</button><button type="button" class="wbt">Help</button></div>
  </form>

  <div class="wm d-flex align-items-center" aria-hidden="true"><span>ANY</span><svg width="66" height="62" viewBox="0 0 68 62"><path d="M12 54V10l7-3v44zM23 4l42 26-42 28V44l22-14-22-12z" fill="rgba(255,255,255,.5)" stroke="#fff" stroke-width="2"/></svg><span>RUN</span></div>
</div>
<script src="https://cdn.jsdelivr.net/npm/bootstrap@5.3.0/dist/js/bootstrap.bundle.min.js"></script>
</body>
</html>
